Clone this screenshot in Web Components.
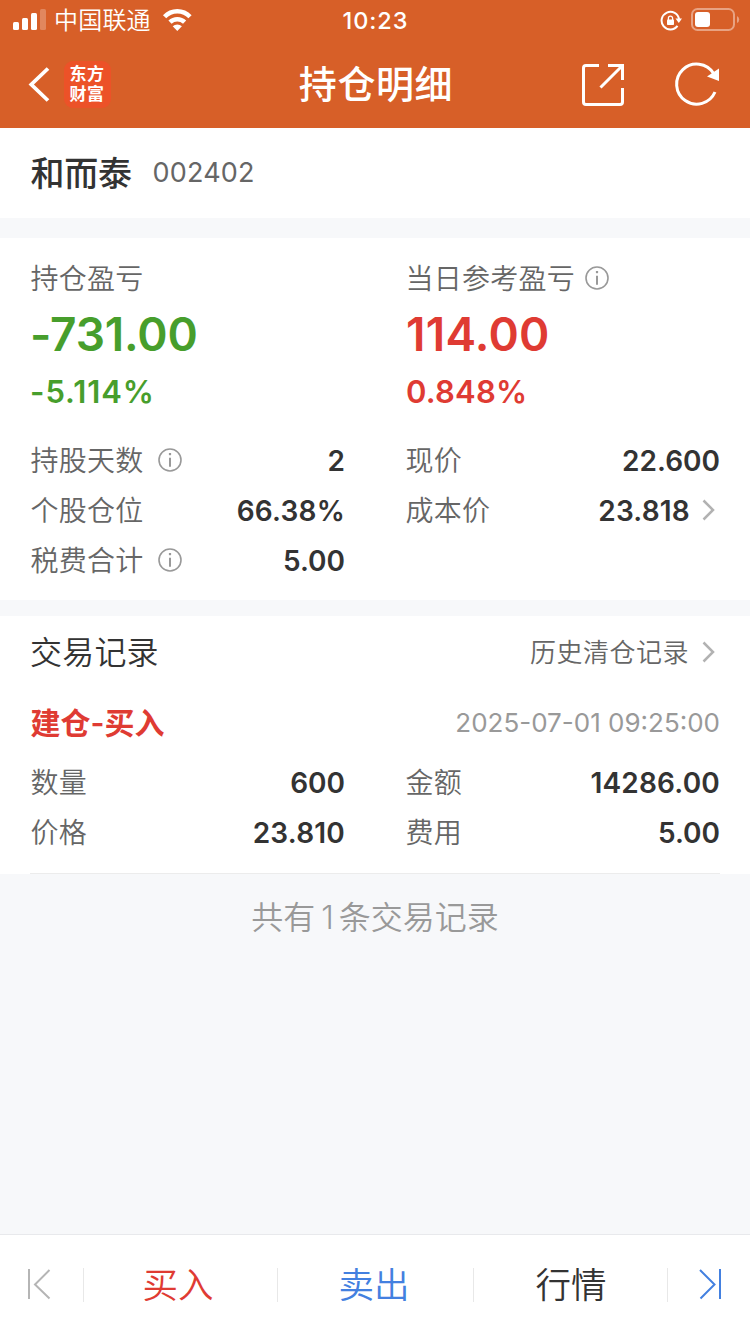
<!DOCTYPE html>
<html lang="zh-CN">
<head>
<meta charset="utf-8">
<title>持仓明细</title>
<style>
html,body{margin:0;padding:0}
body{width:750px;height:1334px;overflow:hidden;background:#f7f8fa;font-family:Inter,"Noto Sans CJK SC",sans-serif;color:#333}
</style>
</head>
<body>
<holding-page></holding-page>
<script>
const define=(name,css,html)=>customElements.define(name,class extends HTMLElement{
  constructor(){
    super();
    const t=document.createElement('template');
    t.innerHTML=`<style>*{box-sizing:border-box}svg{display:block}${css}</style>${html}`;
    this.attachShadow({mode:'open'}).appendChild(t.content.cloneNode(true));
  }
});

define('status-bar',`
:host{display:grid;grid-template-columns:1fr auto 1fr;height:40px;align-items:center;color:#fff}
.l{display:flex;align-items:center;height:40px;padding-left:13px}
.c{font-size:24px;line-height:38px;padding-top:2px;letter-spacing:.2px;font-weight:350;margin-left:8px;width:100px;white-space:nowrap}
.t{font-size:23.5px;font-weight:500;letter-spacing:.9px;line-height:38px;padding-top:2px;margin-left:1px}
.r{display:flex;justify-content:flex-end;padding-right:10px;height:40px}`,
`<div class="l"><svg width="33" height="40" fill="#fff"><rect y="22" width="6" height="8" rx="1.5"/><rect x="9" y="18" width="6" height="12" rx="1.5"/><rect x="18" y="13" width="6" height="17" rx="1.5"/><rect x="27" y="9" width="6" height="21" rx="1.5" opacity=".25"/></svg>
<span class="c">中国联通</span>
<svg width="34" height="40" viewBox="154 0 34 40" style="margin-left:7.500px" fill="none" stroke="#fff" stroke-width="4.500"><path d="M156.600 16.700a17.500 17.500 0 0 1 25.400 0"/><path d="M162 22.200a10.400 10.400 0 0 1 14.600 0"/><path d="M169.300 31l-4.600-4.800a6.800 6.800 0 0 1 9.200 0z" fill="#fff" stroke="none"/></svg></div>
<span class="t">10:23</span>
<div class="r"><svg width="80" height="40" viewBox="660 0 80 40" fill="none"><path d="M677.500 25.800a8.800 8.800 0 1 1 1.600-6.500" stroke="#fff" stroke-width="2"/><path d="M675.500 18.500h6.500l-3.200 4.500z" fill="#fff"/><rect x="667" y="19.500" width="7" height="5.500" rx=".8" fill="#fff"/><path d="M668.400 20v-1.800a2.100 2.100 0 0 1 4.200 0V20" stroke="#fff" stroke-width="1.300"/><rect x="692" y="9" width="42" height="21" rx="5.500" stroke="#fff" stroke-opacity=".42" stroke-width="2"/><rect x="695" y="12" width="15" height="15" rx="3" fill="#fff"/><path d="M737 16q2.200 1 2.200 3.500T737 23z" fill="#fff" opacity=".42"/></svg></div>`);

define('app-logo',`
:host{display:flex;align-items:center;justify-content:center;width:47px;height:47px;border-radius:9px;background:#ec5228;color:#fff;font:700 17px/20px "Noto Sans CJK SC",sans-serif;letter-spacing:.6px;padding-bottom:2px}
span{display:block;width:36px;height:40px;word-break:break-all}`,
`<span>东方财富</span>`);

define('nav-bar',`
:host{display:grid;grid-template-columns:1fr auto 1fr;height:88px;align-items:center;color:#fff}
.l{display:flex;align-items:center}
h1{margin:0 0 0 2px;font:500 38px/84px "Noto Sans CJK SC",sans-serif;letter-spacing:.6px;height:88px}
.r{display:flex;justify-content:flex-end}`,
`<div class="l"><svg width="64" height="88" viewBox="0 40 64 88"><path d="M48 68.500L31.300 84.500L48 100.500" fill="none" stroke="#fff" stroke-width="3.800"/></svg><app-logo></app-logo></div>
<h1>持仓明细</h1>
<div class="r"><svg width="180" height="88" viewBox="570 40 180 88" fill="none" stroke="#fff" stroke-width="3"><path d="M599 65.500h-13q-2.500 0-2.500 2.500v34q0 2.500 2.500 2.500h34q2.500 0 2.500-2.500v-14M608 65.500h14.500V80M622 66l-21.500 21.500"/><path d="M713.600 73.500a20 20 0 1 0 1.400 18.500"/><path d="M719 68.500v12.500l-12-4.500z" fill="#fff" stroke="none"/></svg></div>`);

define('stock-title',`
:host{display:flex;height:90px;padding:0 30px;align-items:flex-start;background:#fff}
b{font:500 34px/87px "Noto Sans CJK SC",sans-serif;width:122.500px;padding-left:.5px;letter-spacing:-.2px}
span{font-size:27px;color:#666;line-height:90px;letter-spacing:.2px}`,
`<b><slot name="name"></slot></b><span><slot name="code"></slot></span>`);

define('info-icon',`:host{display:block;width:24px;height:24px}`,
`<svg width="24" height="24" fill="none" stroke="#999" stroke-width="1.600"><circle cx="12" cy="12" r="11"/><path d="M12 9.700v9" stroke-width="2"/><path d="M12 5v2.200" stroke-width="2.200"/></svg>`);

define('chevron-icon',`:host{display:block;width:14px;height:22px}`,
`<svg width="14" height="22"><path d="M1.500 1.500l9.500 9.500-9.500 9.500" fill="none" stroke="#b2b2b2" stroke-width="2.500"/></svg>`);

define('profit-figure',`
:host{display:block}
.l{display:flex;align-items:center;height:40px;gap:9.500px;font-size:28px;letter-spacing:.25px;color:#666;font-weight:350}
.n{padding:0 0 2px .5px}
.v{height:72px;line-height:72px;font-size:46px;font-weight:600;white-space:nowrap;letter-spacing:var(--value-spacing,0);padding-left:var(--inset,0)}
.p{height:44px;line-height:44px;font-size:31px;font-weight:600;white-space:nowrap;letter-spacing:var(--rate-spacing,0);padding-left:var(--inset,0)}`,
`<div class="l"><span class="n"><slot name="label"></slot></span><slot name="icon"></slot></div><div class="v"><slot name="value"></slot></div><div class="p"><slot name="rate"></slot></div>`);

define('data-row',`
:host{display:flex;height:50px;align-items:center;color:#333}
.l{font-size:28px;letter-spacing:.25px;color:#666;font-weight:350;margin-right:14.500px;padding:0 0 2px .5px}
.v{font-size:28px;line-height:48px;padding-top:2px;font-weight:600;margin-left:auto;letter-spacing:var(--value-spacing,0)}
::slotted(chevron-icon){margin:0 4px 0 12px}`,
`<span class="l"><slot name="label"></slot></span><slot name="icon"></slot><span class="v"><slot></slot></span><slot name="more"></slot>`);

define('holding-summary',`
:host{display:grid;grid-template-columns:1fr 1fr;column-gap:60px;margin-top:20px;height:362px;padding:20px 30px 15px;background:#fff;align-content:start}
.green{color:#479e2c;--value-spacing:-.15px;--rate-spacing:.95px}
.red{color:#df3b33;--value-spacing:.25px;--rate-spacing:.2px;--inset:1px}
profit-figure{margin-bottom:21px}
.wide{--value-spacing:.2px}`,
`<profit-figure class="green"><span slot="label">持仓盈亏</span><span slot="value">-731.00</span><span slot="rate">-5.114%</span></profit-figure>
<profit-figure class="red"><span slot="label">当日参考盈亏</span><info-icon slot="icon"></info-icon><span slot="value">114.00</span><span slot="rate">0.848%</span></profit-figure>
<data-row><span slot="label">持股天数</span><info-icon slot="icon"></info-icon>2</data-row>
<data-row><span slot="label">现价</span>22.600</data-row>
<data-row class="wide"><span slot="label">个股仓位</span>66.38%</data-row>
<data-row class="wide"><span slot="label">成本价</span>23.818<chevron-icon slot="more"></chevron-icon></data-row>
<data-row><span slot="label">税费合计</span><info-icon slot="icon"></info-icon>5.00</data-row>`);

define('trade-records',`
:host{display:block;margin-top:16px;height:258px;padding:0 30px;background:#fff}
.h,.e{display:flex;justify-content:space-between;align-items:center}
.h{height:72px}.e{height:68px;margin-bottom:1px}
h2{margin:0;padding-bottom:4px;font-size:32px;font-weight:350;letter-spacing:.2px}
.m{display:flex;align-items:center;font-size:26px;font-weight:350;color:#666;letter-spacing:.5px}
.m span{padding-bottom:3px}
chevron-icon{margin:0 4px 0 13px}
.k{color:#df3b33;font-size:30px;font-weight:600;padding:0 0 2px .5px}
time{color:#999;font-size:26px}
.g{display:grid;grid-template-columns:1fr 1fr;column-gap:60px;height:117px;align-content:start;border-bottom:1px solid #ececec}
.wide{--value-spacing:.2px}`,
`<div class="h"><h2>交易记录</h2><span class="m"><span>历史清仓记录</span><chevron-icon></chevron-icon></span></div>
<div class="e"><span class="k">建仓-买入</span><time>2025-07-01 09:25:00</time></div>
<div class="g"><data-row><span slot="label">数量</span>600</data-row><data-row class="wide"><span slot="label">金额</span>14286.00</data-row><data-row class="wide"><span slot="label">价格</span>23.810</data-row><data-row><span slot="label">费用</span>5.00</data-row></div>`);

define('action-bar',`
:host{display:grid;grid-template-columns:84px 194px 196px 194px 82px;align-items:center;height:100px;border-top:1px solid #e8e9ec;background:#fff;font-size:35.500px;font-weight:350}
div{height:34px;display:flex;align-items:center;justify-content:center;border-right:1px solid #e8e8e8}
div:last-child{border:0}
span{padding-bottom:4px}
.b{color:#df3b33;padding-right:5px}.s{color:#4380e0;padding-right:3px}.q{padding-left:1px}
svg{fill:none;stroke-width:2}`,
`<div><svg width="83" height="34"><path d="M29 1v30M49.500 2L35 16.500L49.500 30.500" stroke="#b5b5b5"/></svg></div>
<div class="b"><span>买入</span></div><div class="s"><span>卖出</span></div><div class="q"><span>行情</span></div>
<div><svg width="82" height="34" viewBox="668 0 82 34"><path d="M720 1v30M700 2l14.500 14.500L700.500 30.500" stroke="#4380e0"/></svg></div>`);

define('holding-page',`
:host{display:flex;flex-direction:column;width:750px;height:1334px}
header{background:#d75f28;height:128px}
p{margin:0;flex:1;text-align:center;line-height:88px;font-size:32px;color:#999;font-weight:350}
p span{padding:0 5px 0 6px}`,
`<header><status-bar></status-bar><nav-bar></nav-bar></header>
<stock-title><span slot="name">和而泰</span><span slot="code">002402</span></stock-title>
<holding-summary></holding-summary>
<trade-records></trade-records>
<p>共有<span>1</span>条交易记录</p>
<action-bar></action-bar>`);
</script>
</body>
</html>
